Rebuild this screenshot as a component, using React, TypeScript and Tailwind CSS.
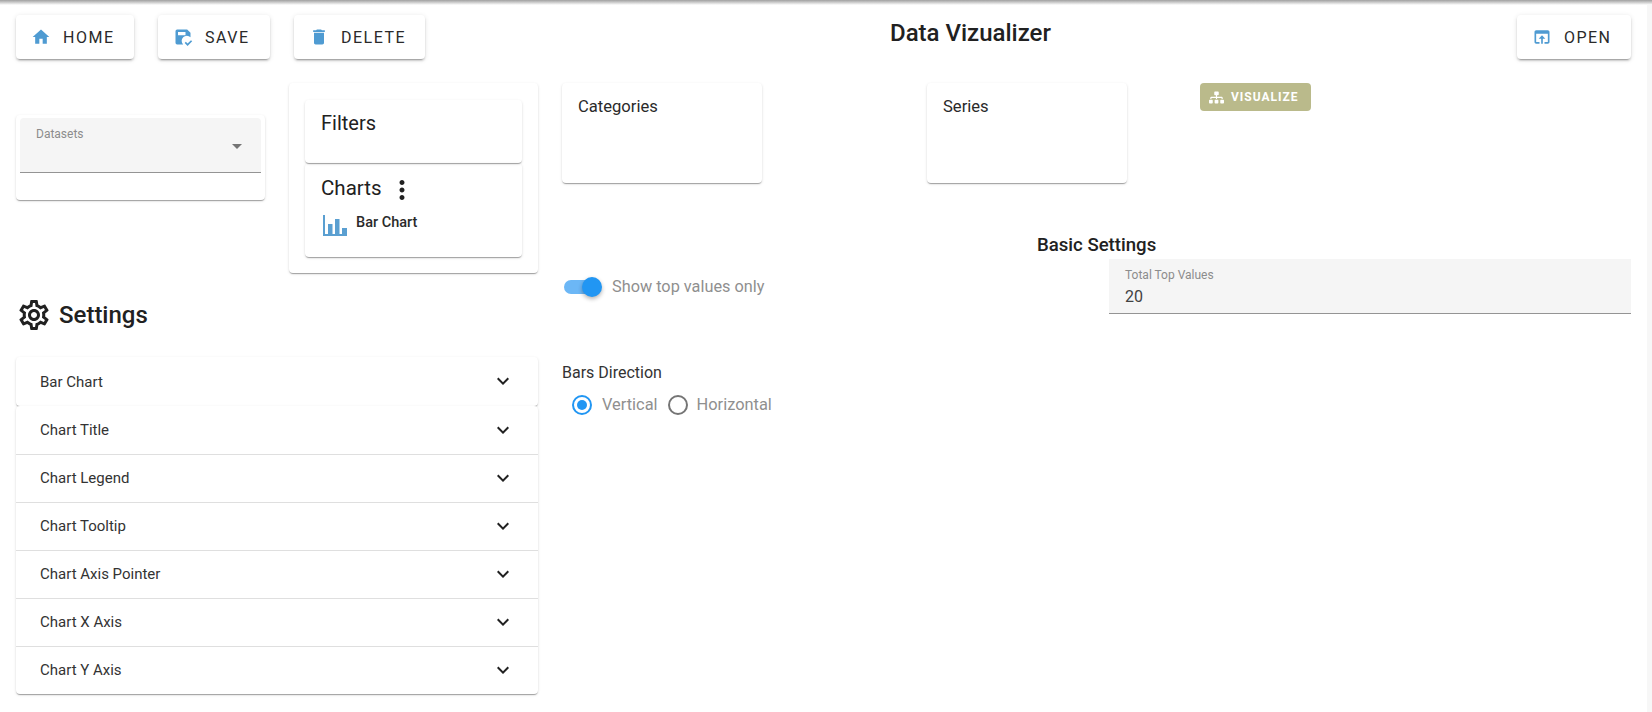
import React from "react";
import { FaSitemap } from "react-icons/fa";

const shadow = "shadow-[0_2px_1px_-1px_rgba(0,0,0,0.2),0_1px_1px_0_rgba(0,0,0,0.14),0_1px_3px_0_rgba(0,0,0,0.12)]";
const btnShadow = "shadow-[0_3px_1px_-2px_rgba(0,0,0,0.2),0_2px_2px_0_rgba(0,0,0,0.14),0_1px_5px_0_rgba(0,0,0,0.12)]";

const paths = {
  home: "M10 20v-6h4v6h5v-8h3L12 3 2 12h3v8z",
  del: "M6 19c0 1.1.9 2 2 2h8c1.1 0 2-.9 2-2V7H6v12zM19 4h-3.5l-1-1h-5l-1 1H5v2h14V4z",
  open: "M19 4H5c-1.11 0-2 .9-2 2v12c0 1.1.89 2 2 2h4v-2H5V8h14v10h-4v2h4c1.1 0 2-.9 2-2V6c0-1.1-.89-2-2-2zm-7 6l-4 4h3v6h2v-6h3l-4-4z",
  save: "M5 3h12l4 4v5.2a6 6 0 0 0-8.8 8.8H5a2 2 0 0 1-2-2V5a2 2 0 0 1 2-2zm1 3v4h9V6H6zm8 13.2l1.4-1.4 2.1 2.1 4.1-4.1 1.4 1.4-5.5 5.5L14 19.2z",
  vert: "M12 8c1.1 0 2-.9 2-2s-.9-2-2-2-2 .9-2 2 .9 2 2 2zm0 2c-1.1 0-2 .9-2 2s.9 2 2 2 2-.9 2-2-.9-2-2-2zm0 6c-1.1 0-2 .9-2 2s.9 2 2 2 2-.9 2-2-.9-2-2-2z",
  chevron: "M16.59 8.59L12 13.17 7.41 8.59 6 10l6 6 6-6z",
  caret: "M7 10l5 5 5-5z",
  gear: "M19.43 12.98c.04-.32.07-.64.07-.98 0-.34-.03-.66-.07-.98l2.11-1.65c.19-.15.24-.42.12-.64l-2-3.46c-.09-.16-.26-.25-.44-.25-.06 0-.12.01-.17.03l-2.49 1c-.52-.4-1.08-.73-1.69-.98l-.38-2.65C14.46 2.18 14.25 2 14 2h-4c-.25 0-.46.18-.49.42l-.38 2.65c-.61.25-1.17.59-1.69.98l-2.49-1c-.06-.02-.12-.03-.18-.03-.17 0-.34.09-.43.25l-2 3.46c-.13.22-.07.49.12.64l2.11 1.65c-.04.32-.07.65-.07.98 0 .33.03.66.07.98l-2.11 1.65c-.19.15-.24.42-.12.64l2 3.46c.09.16.26.25.44.25.06 0 .12-.01.17-.03l2.49-1c.52.4 1.08.73 1.69.98l.38 2.65c.03.24.24.42.49.42h4c.25 0 .46-.18.49-.42l.38-2.65c.61-.25 1.17-.59 1.69-.98l2.49 1c.06.02.12.03.18.03.17 0 .34-.09.43-.25l2-3.46c.12-.22.07-.49-.12-.64l-2.11-1.65zm-1.98-1.71c.04.31.05.52.05.73 0 .21-.02.43-.05.73l-.14 1.13.89.7 1.08.84-.7 1.21-1.27-.51-1.04-.42-.9.68c-.43.32-.84.56-1.25.73l-1.06.43-.16 1.13-.2 1.35h-1.4l-.19-1.35-.16-1.13-1.06-.43c-.43-.18-.83-.41-1.23-.71l-.91-.7-1.06.43-1.27.51-.7-1.21 1.08-.84.89-.7-.14-1.13c-.03-.31-.05-.54-.05-.74s.02-.43.05-.73l.14-1.13-.89-.7-1.08-.84.7-1.21 1.27.51 1.04.42.9-.68c.43-.32.84-.56 1.25-.73l1.06-.43.16-1.13.2-1.35h1.39l.19 1.35.16 1.13 1.06.43c.43.18.83.41 1.23.71l.91.7 1.06-.43 1.27-.51.7 1.21-1.07.85-.89.7.14 1.13zM12 8c-2.21 0-4 1.79-4 4s1.79 4 4 4 4-1.79 4-4-1.79-4-4-4zm0 6c-1.1 0-2-.9-2-2s.9-2 2-2 2 .9 2 2-.9 2-2 2z",
};

function Icon({ d, className }: { d: string; className: string }) {
  return (
    <svg viewBox="0 0 24 24" fill="currentColor" className={className}>
      <path d={d} />
    </svg>
  );
}

function TopButton({ icon, label, width, extra = "" }: { icon: string; label: string; width: string; extra?: string }) {
  return (
    <div className={`flex items-center h-[44px] rounded bg-white pl-[15px] ${btnShadow} ${width} ${extra}`}>
      <Icon d={icon} className="w-[20px] h-[20px] text-[#4f9bd2] shrink-0" />
      <span className="ml-[12px] pt-[2px] text-[16px] tracking-[1.5px] text-[#2a2a2a] font-normal leading-none">{label}</span>
    </div>
  );
}

function AccordionRow({ label, divider = false, textPad }: { label: string; divider?: boolean; textPad: string }) {
  return (
    <div className={`flex items-center justify-between h-[48px] pl-[24px] pr-[23px] ${divider ? "border-t border-[#dfdfdf]" : ""}`}>
      <span className={`text-[15px] text-[#333333] ${textPad}`}>{label}</span>
      <Icon d={paths.chevron} className={`w-[24px] h-[24px] text-[#212121] ${divider ? "-translate-y-[1px]" : ""}`} />
    </div>
  );
}

export default function App() {
  const rows = ["Chart Title", "Chart Legend", "Chart Tooltip", "Chart Axis Pointer", "Chart X Axis", "Chart Y Axis"];
  return (
    <div className="relative flex h-[712px] w-[1652px] overflow-hidden bg-white font-['Roboto',sans-serif] text-[#212121]">
      <div className="absolute inset-x-0 top-0 h-[5px] bg-gradient-to-b from-[#a0a0a0] to-white" />
      <div className="flex-1 min-w-0">
        <header className="flex h-[83px] items-start pt-[15px] pl-[16px]">
          <TopButton icon={paths.home} label="HOME" width="w-[118px]" />
          <TopButton icon={paths.save} label="SAVE" width="w-[112px]" extra="ml-[24px]" />
          <TopButton icon={paths.del} label="DELETE" width="w-[131px]" extra="ml-[24px]" />
          <h1 className="ml-[465px] mt-[3px] text-[24px] leading-[30px] font-medium whitespace-nowrap">Data Vizualizer</h1>
          <TopButton icon={paths.open} label="OPEN" width="w-[114px]" extra="ml-[466px]" />
        </header>

        <div className="flex">
          <div className="ml-[16px] w-[522px]">
            <div className="flex h-[190px] items-start gap-[24px]">
              <div className={`mt-[32px] h-[85px] w-[249px] rounded px-[4px] pt-[3px] bg-white ${shadow}`}>
                <div className="relative h-[55px] rounded-t bg-[#f5f5f5] border-b border-[#949494] pl-[16px] pt-[8px]">
                  <div className="text-[12px] leading-[16px] text-[#8c8c8c]">Datasets</div>
                  <Icon d={paths.caret} className="absolute right-[12px] top-[16px] w-[24px] h-[24px] text-[#757575]" />
                </div>
              </div>
              <div className={`h-[190px] w-[249px] rounded bg-white px-[16px] pt-[17px] ${shadow}`}>
                <div className={`h-[63px] rounded pl-[16px] pt-[10px] ${shadow}`}>
                  <div className="text-[20px] leading-[26px]">Filters</div>
                </div>
                <div className={`h-[94px] rounded pl-[16px] pt-[12px] ${shadow}`}>
                  <div className="flex items-center h-[26px]">
                    <span className="text-[20.5px] leading-[26px]">Charts</span>
                    <Icon d={paths.vert} className="ml-[5px] mt-[4px] w-[30px] h-[30px] text-[#212121]" />
                  </div>
                  <div className="flex items-start mt-[14px]">
                    <svg viewBox="0 0 24 21" fill="#5a9fd1" className="w-[24px] h-[21px] ml-[2px]">
                      <path d="M0 0h2v19h22v2H0z" />
                      <path d="M5 9h4.5v10H5zM12 4h4.5v15H12zM19 13h5v6h-5z" />
                    </svg>
                    <span className="ml-[9px] text-[14.5px] leading-[16px] font-medium text-[#2a2a2a]">Bar Chart</span>
                  </div>
                </div>
              </div>
            </div>

            <div className="mt-[27px] flex items-center h-[29px]">
              <Icon d={paths.gear} className="w-[36px] h-[36px] text-[#212121] shrink-0" />
              <span className="ml-[7px] text-[24px] font-medium leading-[30px]">Settings</span>
            </div>

            <div className={`mt-[28px] rounded bg-white pb-[1px] ${shadow}`}>
              <AccordionRow label="Bar Chart" textPad="pt-[2px]" />
            </div>
            <div className={`relative z-10 rounded bg-white ${shadow}`}>
              {rows.map((r, i) => (
                <AccordionRow key={r} label={r} divider={i > 0} textPad="pt-0" />
              ))}
            </div>
          </div>

          <div className="ml-[24px] w-[1069px]">
            <div className="flex h-[100px] items-start">
              <div className={`h-[100px] w-[200px] rounded bg-white pl-[16px] pt-[14px] ${shadow}`}>
                <div className="text-[16.6px] leading-[20px] text-[#2a2a2a]">Categories</div>
              </div>
              <div className={`ml-[165px] h-[100px] w-[200px] rounded bg-white pl-[16px] pt-[14px] ${shadow}`}>
                <div className="text-[16.6px] leading-[20px] text-[#2a2a2a]">Series</div>
              </div>
              <div className="ml-[73px] flex h-[28px] w-[111px] items-center rounded bg-[#baba8b] pl-[9px] text-white">
                <FaSitemap className="w-[15px] h-[15px]" />
                <span className="ml-[7px] text-[12px] font-bold tracking-[1px]">VISUALIZE</span>
              </div>
            </div>

            <h2 className="ml-[475px] mt-[50px] text-[18.6px] leading-[24px] font-medium">Basic Settings</h2>
            <div className="mt-[2px] flex h-[55px] items-center">
              <div className="relative ml-[2px] h-[14px] w-[32px] rounded-full bg-[#6cb7f6]">
                <div className="absolute left-[18px] top-[-3px] h-[20px] w-[20px] rounded-full bg-[#2196f3] shadow-[0_2px_4px_rgba(0,0,0,0.3)]" />
              </div>
              <span className="ml-[16px] pt-[2px] text-[16.3px] text-[#8f8f8f] whitespace-nowrap">Show top values only</span>
              <div className="ml-auto h-[55px] w-[522px] bg-[#f5f5f5] border-b border-[#949494] pl-[16px] pt-[8px]">
                <div className="text-[12px] leading-[16px] text-[#8c8c8c]">Total Top Values</div>
                <div className="mt-[4px] text-[16px] leading-[20px] text-[#424242]">20</div>
              </div>
            </div>

            <div className="mt-[49px] text-[16px] leading-[20px] text-[#333333]">Bars Direction</div>
            <div className="mt-[11px] flex h-[22px] items-center pl-[10px]">
              <div className="flex h-[20px] w-[20px] items-center justify-center rounded-full border-2 border-[#2196f3]">
                <div className="h-[10px] w-[10px] rounded-full bg-[#2196f3]" />
              </div>
              <span className="ml-[10px] text-[16.4px] text-[#8f8f8f]">Vertical</span>
              <div className="ml-[10px] h-[20px] w-[20px] rounded-full border-2 border-[#757575]" />
              <span className="ml-[9px] text-[16.4px] text-[#8f8f8f]">Horizontal</span>
            </div>
          </div>
        </div>
      </div>
      <div className="w-[5px] shrink-0 bg-[#f7f7f7]" />
    </div>
  );
}
